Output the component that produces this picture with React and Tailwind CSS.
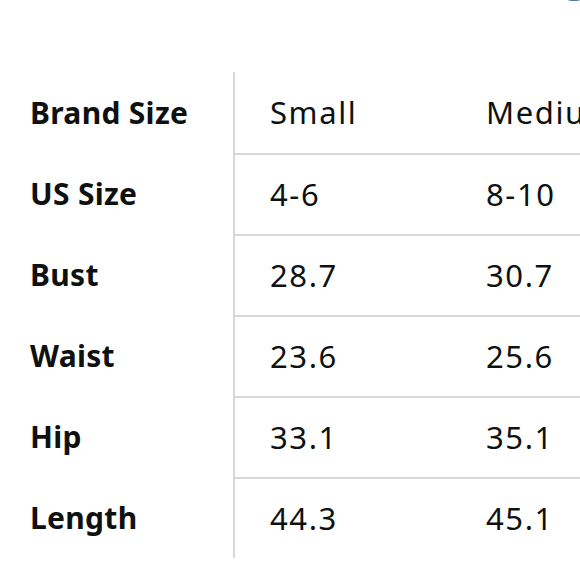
import React from 'react';

const ROWS = [
  { label: 'Brand Size', values: ['Small', 'Medium'] },
  { label: 'US Size', values: ['4-6', '8-10'] },
  { label: 'Bust', values: ['28.7', '30.7'] },
  { label: 'Waist', values: ['23.6', '25.6'] },
  { label: 'Hip', values: ['33.1', '35.1'] },
  { label: 'Length', values: ['44.3', '45.1'] }
];

const App = () => {
  return (
    <div
      className="relative w-[580px] h-[580px] overflow-hidden bg-white pt-[72px] text-[#0f1111]"
      style={{ fontFamily: '"Noto Sans", "Open Sans", sans-serif' }}
    >
      {/* cut-off blue element peeking in at the top edge */}
      <div className="absolute top-[-19px] right-[-6px] w-[24px] h-[20px] rounded-full bg-[#4f7ba3]" />

      <div className="flex flex-col">
        {ROWS.map((row, i) => (
          <div key={row.label} className="flex h-[81px]">
            <div className="flex items-center w-[235px] shrink-0 pl-[30px] border-r-2 border-[#d5d9d9] text-[30px] font-bold tracking-[0.3px]">
              {row.label}
            </div>
            {row.values.map((v) => (
              <div
                key={v}
                className={`flex items-center w-[216px] shrink-0 pl-[35px] text-[31px] tracking-[1.6px] whitespace-nowrap ${i > 0 ? 'border-t-2 border-[#d5d9d9]' : ''}`}
              >
                {v}
              </div>
            ))}
          </div>
        ))}
      </div>
    </div>
  );
};

export default App;
